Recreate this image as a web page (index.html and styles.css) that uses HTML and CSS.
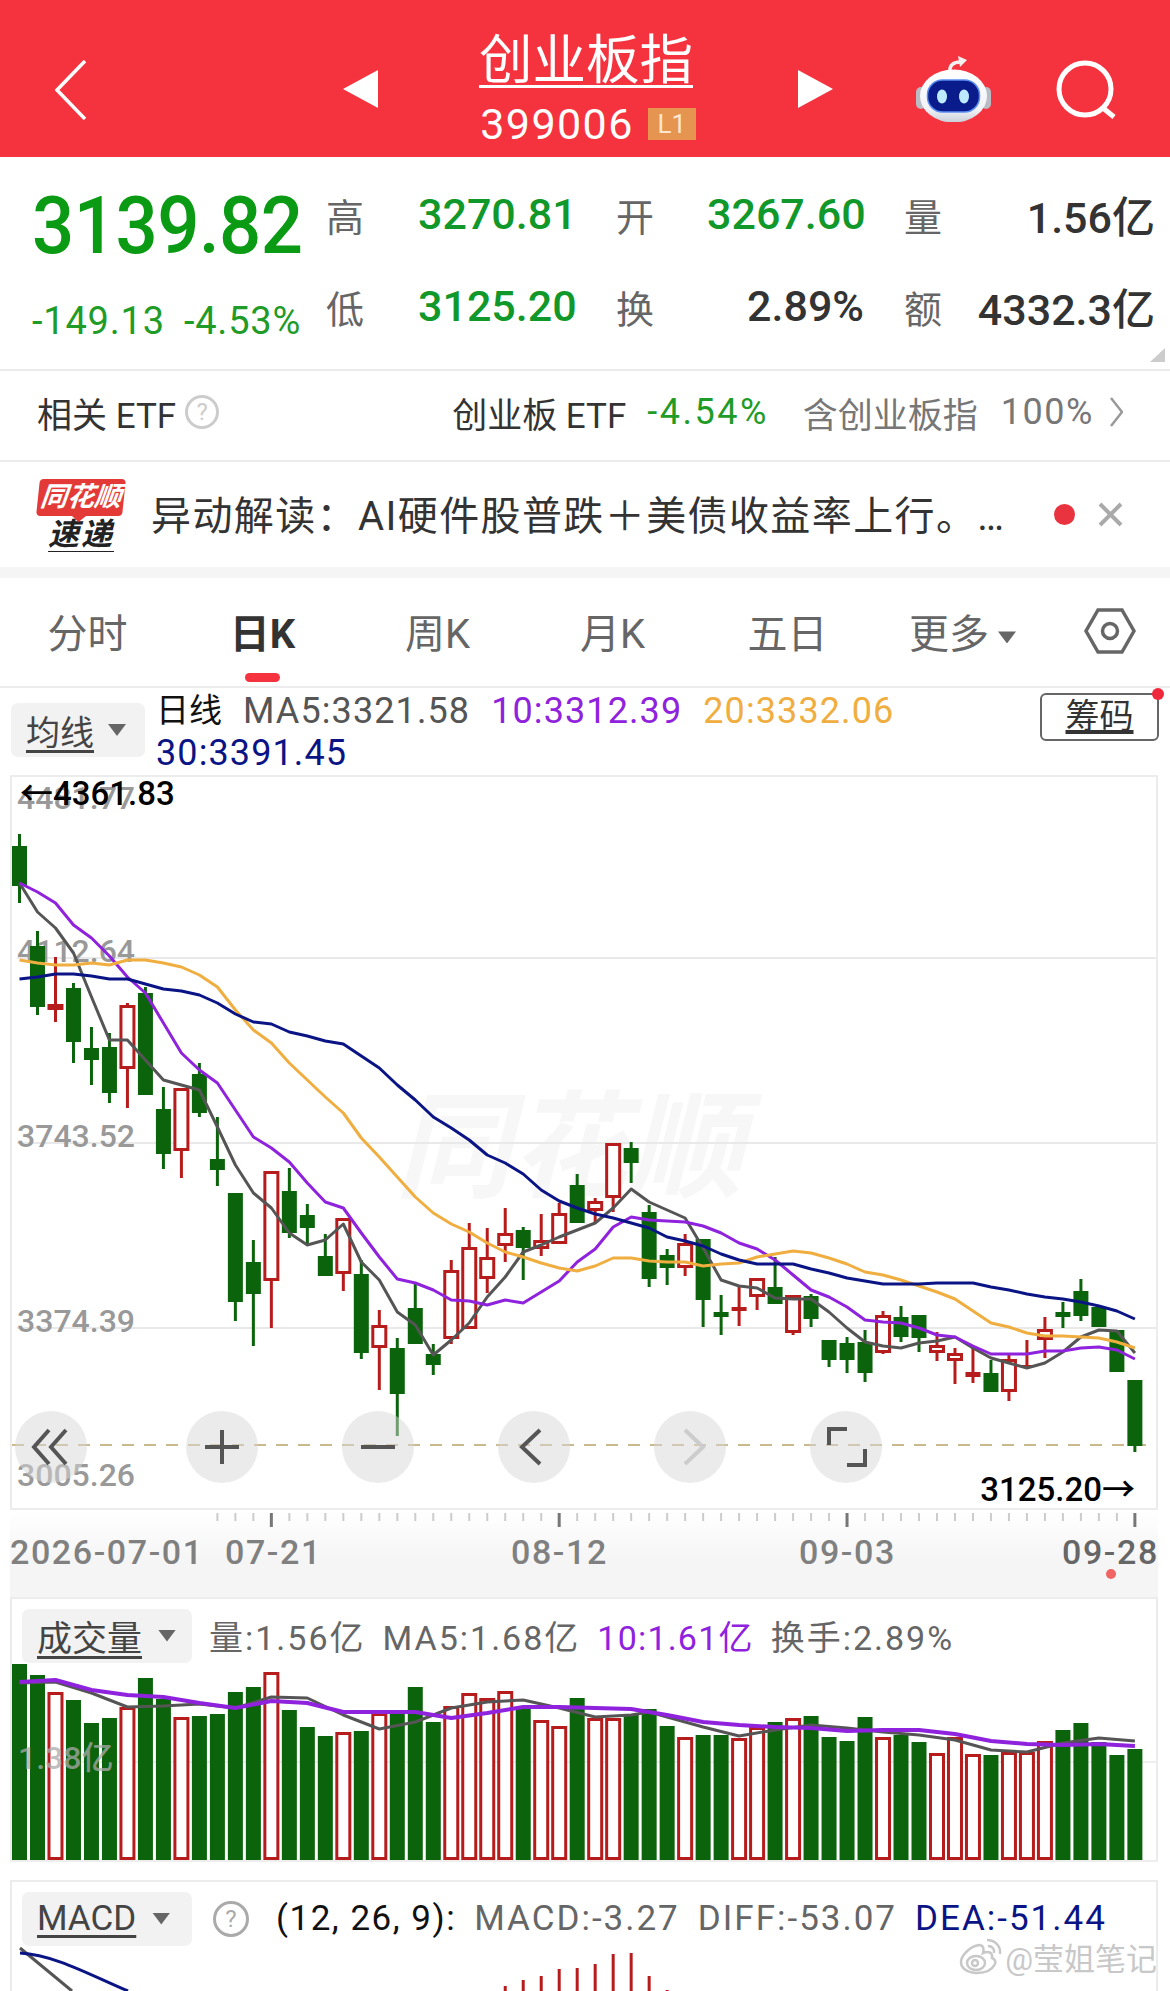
FILE: index.html
```html
<!DOCTYPE html>
<html lang="zh-CN">
<head>
  <meta charset="UTF-8">
  <meta name="viewport" content="width=device-width, initial-scale=1.0">
  <title>创业板指</title>
  <link rel="stylesheet" href="styles.css">
</head>
<body>
  <header class="top-bar">
    <svg class="back-icon" width="32" height="60" viewBox="0 0 32 60"><path d="M30 1L2 30L30 59"/></svg>
    <span class="tri tri-left"></span>
    <div class="title-box">
      <div class="title">创业板指</div>
      <div class="code-row"><span class="code">399006</span><span class="level">L1</span></div>
    </div>
    <span class="tri tri-right"></span>
    <svg class="robot-icon" width="75" height="67" viewBox="0 0 75 67">
      <defs>
        <linearGradient id="headFill" x1="0" y1="0" x2="0" y2="1">
          <stop offset="0" stop-color="#fff"/>
          <stop offset="0.75" stop-color="#f1f3f7"/>
          <stop offset="1" stop-color="#c9cfd8"/>
        </linearGradient>
      </defs>
      <path d="M34 17C33 10 38 7 44 7" fill="none" stroke="#f4f0f0" stroke-width="3.5" stroke-linecap="round"/>
      <path d="M42 1L51 5L44 12Z" fill="#f4f0f0"/>
      <rect x="0" y="32" width="10" height="22" rx="5" fill="#b9bcc4"/>
      <rect x="65" y="32" width="10" height="22" rx="5" fill="#b9bcc4"/>
      <ellipse cx="37.5" cy="41" rx="33.5" ry="26.5" fill="url(#headFill)"/>
      <rect x="11.5" y="25" width="52" height="32" rx="15" fill="#0a1c8c" stroke="#5b8cf0" stroke-width="1.5"/>
      <ellipse cx="26" cy="41.5" rx="5" ry="7" fill="#bdeaff"/>
      <ellipse cx="48" cy="41.5" rx="5" ry="7" fill="#bdeaff"/>
    </svg>
    <svg class="search-icon" width="60" height="60" viewBox="0 0 60 60"><circle cx="29" cy="29" r="26"/><path d="M47 48L58 57"/></svg>
  </header>

  <section class="quote">
    <div class="price-box">
      <div class="price">3139.82</div>
      <div class="change"><span>-149.13</span><span>-4.53%</span></div>
    </div>
    <div class="stats">
      <span class="stat-label">高</span><span class="stat-val up">3270.81</span>
      <span class="stat-label pad-mid">开</span><span class="stat-val up right">3267.60</span>
      <span class="stat-label pad-end">量</span><span class="stat-val right">1.56亿</span>
      <span class="stat-label">低</span><span class="stat-val up">3125.20</span>
      <span class="stat-label pad-mid">换</span><span class="stat-val right">2.89%</span>
      <span class="stat-label pad-end">额</span><span class="stat-val right">4332.3亿</span>
    </div>
    <span class="corner-mark"></span>
  </section>

  <section class="etf-row">
    <span>相关 ETF</span>
    <span class="help">?</span>
    <span class="etf-name">创业板 ETF</span>
    <span class="etf-pct">-4.54%</span>
    <span class="etf-hold">含创业板指</span>
    <span class="etf-share">100%</span>
    <svg class="etf-arrow" width="13" height="30" viewBox="0 0 13 30"><path d="M1 1L12 15L1 29"/></svg>
  </section>

  <section class="news-row">
    <div class="news-logo">
      <span class="logo-top">同花顺</span>
      <span class="logo-bottom">速递</span>
    </div>
    <div class="news-text">异动解读：AI硬件股普跌＋美债收益率上行。…</div>
    <span class="news-dot"></span>
    <svg class="news-close" width="25" height="25" viewBox="0 0 25 25"><path d="M2 2L23 23M23 2L2 23"/></svg>
  </section>

  <div class="band"></div>

  <nav class="tabs">
    <span class="tab">分时</span>
    <span class="tab active">日K</span>
    <span class="tab">周K</span>
    <span class="tab">月K</span>
    <span class="tab">五日</span>
    <span class="tab">更多<i class="caret caret-tab"></i></span>
    <svg class="hex-icon" width="52" height="46" viewBox="0 0 52 46"><path d="M14 2H38L50 23L38 44H14L2 23Z"/><circle cx="26" cy="23" r="7.5"/></svg>
  </nav>

  <div class="ma-row">
    <span class="pick pick-ma"><u>均线</u><i class="caret"></i></span>
    <div class="ma-legend">
      <span class="ma-name">日线</span>
      <span class="c-grey">MA5:3321.58</span>
      <span class="c-purple">10:3312.39</span>
      <span class="c-orange">20:3332.06</span>
      <span class="c-navy">30:3391.45</span>
    </div>
    <span class="chip-btn"><u>筹码</u><i class="chip-dot"></i></span>
  </div>

  <div class="kline">
    <svg class="kline-svg" width="1144" height="731" viewBox="12 777 1144 731">
      <text class="brand" x="395" y="1188">同花顺</text>
      <path class="grid" d="M17 958H1156M17 1143H1156M17 1328H1156"/>
      <path class="low-line" d="M12 1445H1156"/>
      <text class="axis-y" x="17" y="809">4481.77</text>
      <text class="axis-y" x="17" y="962">4112.64</text>
      <text class="axis-y" x="17" y="1147">3743.52</text>
      <text class="axis-y" x="17" y="1332">3374.39</text>
      <text class="axis-y" x="17" y="1486">3005.26</text>
      <g id="candles"></g>
      <text class="extreme" x="20" y="805">←4361.83</text>
      <text class="extreme" x="1135" y="1501" text-anchor="end">3125.20→</text>
    </svg>
    <div class="zoom-bar">
      <span class="zoom-btn first"><svg width="72" height="72" viewBox="0 0 72 72"><path d="M34 19L19 36L34 53M51 19L36 36L51 53"/></svg></span>
      <span class="zoom-btn"><svg width="72" height="72" viewBox="0 0 72 72"><path d="M19 36H53M36 19V53"/></svg></span>
      <span class="zoom-btn"><svg width="72" height="72" viewBox="0 0 72 72"><path d="M19 36H53"/></svg></span>
      <span class="zoom-btn"><svg width="72" height="72" viewBox="0 0 72 72"><path d="M42 19L24 36L42 53"/></svg></span>
      <span class="zoom-btn off"><svg width="72" height="72" viewBox="0 0 72 72"><path d="M31 19L49 36L31 53"/></svg></span>
      <span class="zoom-btn"><svg width="72" height="72" viewBox="0 0 72 72"><path d="M19 34V18H37M37 54H55V38"/></svg></span>
    </div>
  </div>

  <div class="date-strip">
    <svg class="date-svg" width="1148" height="87" viewBox="10 1510 1148 87">
      <g id="ticks"></g>
      <text class="date" x="10" y="1564">2026-07-01</text>
      <text class="date" x="225" y="1564">07-21</text>
      <text class="date" x="511" y="1564">08-12</text>
      <text class="date" x="799" y="1564">09-03</text>
      <text class="date date-last" x="1062" y="1564">09-28</text>
      <circle cx="1111" cy="1574" r="5" fill="#f06464"/>
    </svg>
  </div>

  <section class="panel panel-vol">
    <div class="panel-head">
      <span class="pick pick-wide"><u>成交量</u><i class="caret"></i></span>
      <div class="panel-values">
        <span>量:1.56亿</span>
        <span>MA5:1.68亿</span>
        <span class="c-purple tight">10:1.61亿</span>
        <span>换手:2.89%</span>
      </div>
    </div>
    <svg class="vol-svg" width="1144" height="198" viewBox="12 1662 1144 198">
      <path class="grid-soft" d="M17 1762H1156"/>
      <g id="volume"></g>
      <text class="axis-vol" x="18" y="1769">1.38亿</text>
    </svg>
  </section>

  <section class="panel panel-macd">
    <div class="panel-head">
      <span class="pick pick-wide"><u>MACD</u><i class="caret"></i></span>
      <span class="help help-macd">?</span>
      <div class="macd-values">
        <span class="c-black tight">(12, 26, 9):</span>
        <span>MACD:-3.27</span>
        <span>DIFF:-53.07</span>
        <span class="c-navy">DEA:-51.44</span>
      </div>
    </div>
    <svg class="macd-svg" width="1144" height="46" viewBox="12 1945 1144 46">
      <g id="macd"></g>
      <path class="macd-grey" d="M20 1948L72 1991"/>
      <path class="macd-navy" d="M20 1953C55 1955 90 1975 128 1991"/>
    </svg>
  </section>

  <div class="stamp">
    <svg width="44" height="38" viewBox="0 0 44 38">
      <path d="M18 35C8 35 2 30 2 24C2 17 12 8 20 7C25 7 25 12 24 15C29 13 34 14 33 20C36 21 37 24 36 26C33 32 26 35 18 35Z"/>
      <ellipse cx="17" cy="25" rx="9" ry="7"/>
      <circle cx="16" cy="25" r="3"/>
      <path d="M28 2C36 2 42 8 41 16M29 8C33 8 36 11 35 15"/>
    </svg>
    <span>@莹姐笔记</span>
  </div>

  <script src="chart.js"></script>
</body>
</html>
```

FILE: styles.css
```css
* {
  box-sizing: border-box;
}
html, body {
  margin: 0;
  padding: 0;
}
body {
  position: relative;
  width: 1170px;
  height: 1991px;
  overflow: hidden;
  background: #fff;
  color: #333;
  font-family: Roboto, "Noto Sans CJK SC", sans-serif;
}
i {
  font-style: normal;
}

/* top bar */
.top-bar {
  display: flex;
  align-items: flex-start;
  height: 157px;
  padding-left: 55px;
  background: #f5333f;
  color: #fff;
}
.back-icon {
  margin-top: 60px;
}
.back-icon path {
  fill: none;
  stroke: #fff;
  stroke-width: 3.5;
}
.tri {
  width: 35px;
  height: 38px;
  margin-top: 70px;
  background: #fff;
}
.tri-left {
  margin-left: 256px;
  clip-path: polygon(0 50%, 100% 0, 100% 100%);
}
.tri-right {
  clip-path: polygon(0 0, 100% 50%, 0 100%);
}
.title-box {
  width: 420px;
  padding-top: 26px;
  text-align: center;
}
.title {
  font-size: 53.5px;
  line-height: 70px;
  margin-right: 4px;
  text-decoration: underline;
  text-decoration-thickness: 3px;
  text-underline-offset: 6px;
}
.code-row {
  display: flex;
  justify-content: center;
  align-items: center;
  margin-top: 8px;
  height: 40px;
}
.code {
  font-size: 43px;
  letter-spacing: 1.4px;
}
.level {
  margin-left: 14px;
  width: 48px;
  height: 32px;
  background: #e5954f;
  color: #fbe6cf;
  font-size: 26px;
  line-height: 32px;
}
.robot-icon {
  margin: 55px 0 0 83px;
}
.search-icon {
  margin: 60px 0 0 65px;
}
.search-icon circle,
.search-icon path {
  fill: none;
  stroke: #fff;
  stroke-width: 5;
}

/* quote block */
.quote {
  position: relative;
  display: flex;
  height: 212px;
  padding: 11px 0 0 32px;
}
.price-box {
  width: 294px;
}
.price {
  color: #0b9a13;
  font-size: 80px;
  font-weight: 500;
  line-height: 116px;
  letter-spacing: -0.6px;
  transform: scaleX(0.93);
  transform-origin: left center;
}
.change {
  display: flex;
  gap: 19px;
  color: #1f9c27;
  font-size: 38px;
  line-height: 74px;
  letter-spacing: 0.8px;
  white-space: nowrap;
}
.stats {
  display: grid;
  grid-template-columns: 92px 154px 135px 157px 80px 1fr;
  grid-auto-rows: 92px;
  width: 829px;
  align-items: center;
}
.stat-label {
  color: #666;
  font-size: 38px;
}
.pad-mid {
  padding-left: 44px;
}
.pad-end {
  padding-left: 40px;
}
.stat-val {
  color: #333;
  font-size: 43px;
  font-weight: 500;
  white-space: nowrap;
}
.stat-val.up {
  color: #10982a;
}
.stat-val.right {
  text-align: right;
}
.corner-mark {
  position: absolute;
  right: 5px;
  bottom: 7px;
  width: 15px;
  height: 14px;
  background: #ccc;
  clip-path: polygon(100% 0, 100% 100%, 0 100%);
}

/* etf row */
.etf-row {
  display: flex;
  align-items: center;
  height: 91px;
  padding: 0 0 7px 37px;
  border-top: 2px solid #ececec;
  font-size: 35px;
  color: #333;
}
.help {
  width: 34px;
  height: 34px;
  margin-left: 9px;
  border: 3px solid #ccc;
  border-radius: 50%;
  color: #ccc;
  font-size: 24px;
  line-height: 28px;
  text-align: center;
}
.etf-name {
  margin-left: 233px;
}
.etf-pct {
  margin-left: 21px;
  color: #1f9c27;
  font-size: 36px;
  letter-spacing: 2.5px;
}
.etf-hold {
  margin-left: 34px;
  color: #777;
}
.etf-share {
  margin-left: 23px;
  color: #777;
  font-size: 36px;
  letter-spacing: 1.5px;
}
.etf-arrow {
  margin-left: 16px;
}
.etf-arrow path {
  fill: none;
  stroke: #999;
  stroke-width: 2.5;
}

/* news row */
.news-row {
  display: flex;
  align-items: center;
  height: 107px;
  padding-left: 37px;
  border-top: 2px solid #ececec;
}
.news-logo {
  display: flex;
  flex-direction: column;
  align-items: center;
  width: 88px;
  height: 72px;
}
.logo-top {
  position: relative;
  width: 86px;
  height: 37px;
  background: #e33a38;
  border-radius: 4px;
  transform: skewX(-6deg);
  color: #fff;
  font-size: 27px;
  font-weight: 700;
  font-style: italic;
  line-height: 37px;
  text-align: center;
  white-space: nowrap;
}
.logo-top::after {
  content: "";
  position: absolute;
  left: 36px;
  bottom: -6px;
  width: 14px;
  height: 6px;
  background: #e33a38;
  clip-path: polygon(0 0, 100% 0, 50% 100%);
}
.logo-bottom {
  margin-top: 3px;
  color: #222;
  font-size: 31px;
  font-weight: 700;
  font-style: italic;
  line-height: 32px;
  letter-spacing: 2px;
  border-bottom: 1px solid #222;
}
.news-text {
  width: 903px;
  margin: -4px 0 0 26px;
  color: #333;
  font-size: 40px;
  white-space: nowrap;
  letter-spacing: 1.4px;
}
.news-dot {
  width: 21px;
  height: 21px;
  border-radius: 50%;
  background: #e9333f;
}
.news-close {
  margin-left: 23px;
}
.news-close path {
  fill: none;
  stroke: #aaa;
  stroke-width: 4;
}
.band {
  height: 11px;
  background: #f5f5f5;
}

/* period tabs */
.tabs {
  position: relative;
  display: flex;
  align-items: center;
  height: 110px;
  padding-bottom: 2px;
  border-bottom: 2px solid #ececec;
}
.tab {
  width: 175px;
  color: #666;
  font-size: 40px;
  text-align: center;
  white-space: nowrap;
}
.tab.active {
  position: relative;
  color: #333;
  font-weight: 700;
}
.tab.active::after {
  content: "";
  position: absolute;
  left: 70px;
  bottom: -22px;
  width: 35px;
  height: 9px;
  border-radius: 5px;
  background: #f5333f;
}
.hex-icon {
  margin-left: 34px;
}
.hex-icon path,
.hex-icon circle {
  fill: none;
  stroke: #666;
  stroke-width: 3.5;
}
.caret {
  display: inline-block;
  width: 18px;
  height: 12px;
  margin-left: 14px;
  background: #666;
  clip-path: polygon(0 0, 100% 0, 50% 100%);
  vertical-align: middle;
}
.caret-tab {
  margin-left: 9px;
}

/* moving average row */
.ma-row {
  position: relative;
  display: flex;
  align-items: flex-start;
  height: 87px;
  padding-left: 11px;
}
.pick {
  display: flex;
  align-items: center;
  height: 54px;
  border-radius: 7px;
  background: #f2f2f2;
  color: #444;
  font-size: 34px;
}
.pick u {
  text-underline-offset: 5px;
}
.pick-ma {
  width: 134px;
  margin-top: 15px;
  padding-left: 15px;
}
.ma-legend {
  display: flex;
  flex-wrap: wrap;
  width: 860px;
  margin-left: 11px;
  padding-top: 2px;
  column-gap: 21px;
  color: #555;
  font-size: 36px;
  line-height: 42px;
  letter-spacing: 1.1px;
}
.ma-name {
  color: #111;
  font-size: 33px;
  letter-spacing: 0;
}
.c-grey { color: #555; }
.c-purple { color: #8f22dd; }
.c-orange { color: #efae3f; }
.c-navy { color: #0a1484; }
.c-black { color: #111; }
.chip-btn {
  position: absolute;
  left: 1040px;
  top: 5px;
  width: 119px;
  height: 48px;
  border: 2px solid #666;
  border-radius: 6px;
  color: #333;
  font-size: 34px;
  line-height: 42px;
  text-align: center;
}
.chip-btn u {
  text-decoration-thickness: 4px;
  text-underline-offset: 2px;
}
.chip-dot {
  position: absolute;
  right: -7px;
  top: -7px;
  width: 12px;
  height: 12px;
  border-radius: 50%;
  background: #f0283c;
}

/* kline chart */
.kline {
  position: relative;
  width: 1148px;
  height: 735px;
  margin-left: 10px;
  border: 2px solid #ececec;
}
.kline-svg {
  display: block;
  overflow: visible;
}
.brand {
  fill: #f7f7f7;
  font-size: 116px;
  font-weight: 700;
  font-style: italic;
}
.grid {
  fill: none;
  stroke: #e9e9e9;
  stroke-width: 2;
}
.grid-soft {
  fill: none;
  stroke: #eee;
  stroke-width: 2;
}
.low-line {
  fill: none;
  stroke: #c9b98d;
  stroke-width: 2;
  stroke-dasharray: 12 10;
}
.axis-y {
  fill: #999;
  font-size: 32px;
  font-weight: 500;
}
.extreme {
  fill: #000;
  font-size: 33px;
  font-weight: 500;
}
.zoom-bar {
  position: absolute;
  left: 3px;
  top: 634px;
  display: flex;
  gap: 84px;
}
.zoom-btn {
  width: 72px;
  height: 72px;
  border-radius: 50%;
  background: rgba(215, 215, 215, 0.5);
}
.zoom-btn.first {
  margin-right: 15px;
}
.zoom-btn svg {
  display: block;
}
.zoom-btn path {
  fill: none;
  stroke: #555;
  stroke-width: 4;
}
.zoom-btn.off path {
  stroke: #ccc;
}

/* date strip */
.date-strip {
  width: 1148px;
  height: 87px;
  margin-left: 10px;
  background: linear-gradient(#fff, #f5f5f5 60%);
}
.date-svg {
  display: block;
  overflow: visible;
}
.date {
  fill: #808080;
  font-size: 34px;
  font-weight: 500;
  letter-spacing: 1.6px;
}
.date-last {
  fill: #666;
}

/* lower panels */
.panel {
  width: 1148px;
  margin-left: 10px;
  border-top: 2px solid #ececec;
  border-left: 2px solid #ececec;
  border-right: 2px solid #ececec;
}
.panel-vol {
  height: 265px;
  border-bottom: 2px solid #eee;
}
.panel-macd {
  margin-top: 18px;
  height: 120px;
}
.panel-head {
  display: flex;
  align-items: center;
  height: 53px;
  margin-top: 10px;
  padding-left: 10px;
}
.pick-wide {
  width: 170px;
  padding-left: 15px;
  font-size: 35px;
}
.pick-wide .caret {
  margin-left: 16px;
}
.panel-values {
  display: flex;
  gap: 17px;
  margin-left: 17px;
  color: #666;
  font-size: 34px;
  letter-spacing: 2px;
  white-space: nowrap;
}
.panel-values .tight {
  letter-spacing: 1.2px;
}
.vol-svg,
.macd-svg {
  display: block;
  overflow: visible;
}
.axis-vol {
  fill: rgba(170, 170, 170, 0.75);
  font-size: 32px;
  font-weight: 500;
}
.help-macd {
  width: 36px;
  height: 36px;
  margin-left: 21px;
  border-color: #aaa;
  color: #aaa;
  line-height: 30px;
}
.macd-values {
  display: flex;
  gap: 18px;
  margin-left: 27px;
  color: #666;
  font-size: 35px;
  letter-spacing: 2px;
  white-space: nowrap;
}
.macd-values .tight {
  letter-spacing: 1.5px;
}
.macd-grey,
.macd-navy {
  fill: none;
  stroke-width: 3;
}
.macd-grey {
  stroke: #555;
}
.macd-navy {
  stroke: #0a1484;
}

/* watermark */
.stamp {
  position: absolute;
  right: 13px;
  bottom: 12px;
  display: flex;
  align-items: center;
  gap: 2px;
  color: #c8c8c8;
  font-size: 31px;
  text-shadow: 0 0 2px #fff, 0 0 2px #fff;
  white-space: nowrap;
}
.stamp path,
.stamp ellipse,
.stamp circle {
  fill: #fff;
  stroke: #c8c8c8;
  stroke-width: 2.5;
}
.stamp path:last-child {
  fill: none;
}
```

FILE: chart.js
```js
var SVG_NS = 'http://www.w3.org/2000/svg';
var STEP = 17.99;
var FIRST_X = 19.5;

function barX(i) {
  return FIRST_X + STEP * i;
}

function addShape(parent, tag, attrs) {
  var el = document.createElementNS(SVG_NS, tag);
  for (var key in attrs) {
    el.setAttribute(key, attrs[key]);
  }
  parent.appendChild(el);
  return el;
}

// g = falling, r = rising, s = rising with a thin solid body: [type, wick top, body top, body bottom, wick bottom]
var candles = [
  ['g', 834, 846, 886, 903], ['g', 931, 946, 1007, 1015], ['r', 957, 1004, 1010, 1022], ['g', 983, 988, 1042, 1063],
  ['g', 1027, 1048, 1060, 1085], ['g', 1033, 1047, 1093, 1103], ['r', 1003, 1005, 1069, 1108], ['g', 987, 993, 1095, 1095],
  ['g', 1087, 1109, 1154, 1169], ['r', 1088, 1088, 1151, 1178], ['g', 1063, 1074, 1113, 1117], ['g', 1117, 1159, 1170, 1186],
  ['g', 1193, 1193, 1302, 1321], ['g', 1240, 1262, 1294, 1346], ['r', 1171, 1171, 1281, 1328], ['g', 1168, 1191, 1233, 1238],
  ['g', 1204, 1215, 1228, 1244], ['g', 1234, 1256, 1276, 1276], ['r', 1218, 1218, 1274, 1291], ['g', 1260, 1274, 1353, 1359],
  ['r', 1310, 1325, 1348, 1390], ['g', 1338, 1348, 1394, 1436], ['g', 1284, 1308, 1344, 1344], ['g', 1344, 1354, 1365, 1375],
  ['r', 1260, 1270, 1339, 1344], ['r', 1223, 1247, 1329, 1329], ['r', 1228, 1257, 1279, 1293], ['r', 1208, 1233, 1246, 1262],
  ['g', 1227, 1230, 1248, 1280], ['r', 1214, 1240, 1249, 1256], ['r', 1203, 1213, 1244, 1244], ['g', 1174, 1185, 1223, 1223],
  ['r', 1198, 1201, 1211, 1223], ['r', 1143, 1143, 1198, 1212], ['g', 1142, 1148, 1163, 1183], ['g', 1205, 1212, 1279, 1287],
  ['g', 1249, 1255, 1268, 1285], ['r', 1234, 1243, 1268, 1276], ['g', 1239, 1239, 1300, 1327], ['g', 1295, 1312, 1317, 1335],
  ['s', 1287, 1307, 1311, 1326], ['r', 1278, 1278, 1297, 1310], ['g', 1257, 1287, 1304, 1304], ['r', 1295, 1295, 1333, 1335],
  ['g', 1294, 1296, 1319, 1327], ['g', 1340, 1340, 1360, 1367], ['g', 1337, 1343, 1360, 1373], ['g', 1330, 1342, 1373, 1382],
  ['r', 1311, 1315, 1353, 1354], ['g', 1306, 1317, 1337, 1342], ['g', 1315, 1315, 1338, 1352], ['r', 1332, 1345, 1353, 1361],
  ['r', 1348, 1353, 1361, 1384], ['s', 1348, 1372, 1377, 1383], ['g', 1360, 1373, 1392, 1392], ['r', 1353, 1359, 1392, 1401],
  ['s', 1340, 1365, 1367, 1368], ['r', 1317, 1329, 1340, 1358], ['g', 1302, 1312, 1317, 1328], ['g', 1279, 1291, 1316, 1321],
  ['g', 1305, 1307, 1327, 1327], ['g', 1330, 1330, 1372, 1372], ['g', 1380, 1380, 1446, 1452]
];

// moving averages, one y for each candle
var ma5 = [883, 912, 928, 953, 997, 1040, 1040, 1060, 1080, 1085, 1090, 1127, 1165, 1193, 1208, 1233, 1245, 1240, 1224, 1262, 1280, 1312, 1325, 1355, 1340, 1323, 1297, 1277, 1252, 1245, 1237, 1230, 1223, 1208, 1189, 1202, 1210, 1218, 1248, 1280, 1286, 1288, 1298, 1299, 1299, 1312, 1328, 1342, 1346, 1348, 1343, 1341, 1337, 1348, 1358, 1363, 1368, 1363, 1352, 1337, 1330, 1331, 1353];
var ma10 = [883, 892, 903, 925, 938, 956, 977, 993, 1023, 1053, 1070, 1083, 1110, 1137, 1148, 1162, 1183, 1202, 1208, 1233, 1257, 1279, 1283, 1290, 1300, 1301, 1305, 1300, 1303, 1292, 1281, 1262, 1249, 1227, 1217, 1220, 1221, 1222, 1226, 1233, 1243, 1249, 1260, 1275, 1290, 1297, 1307, 1320, 1322, 1323, 1328, 1335, 1337, 1346, 1354, 1354, 1354, 1351, 1351, 1348, 1347, 1350, 1359];
var ma20 = [960, 963, 965, 965, 963, 965, 960, 960, 963, 967, 975, 987, 1010, 1030, 1043, 1063, 1080, 1097, 1113, 1138, 1157, 1177, 1197, 1213, 1224, 1232, 1243, 1252, 1257, 1263, 1268, 1271, 1266, 1258, 1258, 1261, 1262, 1262, 1266, 1264, 1263, 1257, 1254, 1251, 1253, 1258, 1264, 1272, 1275, 1280, 1286, 1292, 1299, 1311, 1323, 1327, 1333, 1336, 1336, 1337, 1338, 1342, 1348];
var ma30 = [979, 977, 974, 974, 976, 979, 979, 984, 989, 991, 995, 1003, 1014, 1022, 1024, 1032, 1036, 1041, 1044, 1056, 1068, 1085, 1100, 1117, 1128, 1140, 1155, 1163, 1174, 1190, 1201, 1208, 1214, 1218, 1223, 1228, 1237, 1241, 1246, 1254, 1260, 1264, 1264, 1264, 1269, 1273, 1278, 1281, 1284, 1284, 1284, 1283, 1283, 1283, 1287, 1290, 1294, 1297, 1299, 1302, 1306, 1311, 1319];

// volume bars: type letter plus top as page y
var volumes = ['g1664', 'g1675', 'r1692', 'g1700', 'g1723', 'g1718', 'r1707', 'g1678', 'g1699', 'r1717', 'g1716', 'g1714', 'g1692', 'g1687', 'r1672', 'g1710', 'g1727', 'g1736', 'r1732', 'g1731', 'r1713', 'g1711', 'g1687', 'g1722', 'r1706', 'r1693', 'r1698', 'r1691', 'g1707', 'r1720', 'r1726', 'g1698', 'r1718', 'r1718', 'g1715', 'g1709', 'g1726', 'r1737', 'g1735', 'g1735', 'r1738', 'r1727', 'g1722', 'r1718', 'g1716', 'g1737', 'g1741', 'g1717', 'r1737', 'g1735', 'g1742', 'r1753', 'r1737', 'r1754', 'g1755', 'r1752', 'r1752', 'r1741', 'g1730', 'g1723', 'g1742', 'g1755', 'g1749'];

// volume averages: [candle index, page y], sampled about every other bar
var volMa5 = [[0, 1683], [2, 1682], [4, 1693], [6, 1707], [8, 1706], [10, 1704], [12, 1708], [14, 1697], [16, 1698], [18, 1715], [20, 1729], [22, 1722], [24, 1708], [26, 1702], [28, 1700], [30, 1708], [32, 1717], [34, 1715], [35, 1712], [38, 1727], [40, 1736], [42, 1730], [44, 1725], [46, 1728], [48, 1732], [50, 1735], [52, 1740], [54, 1750], [56, 1752], [58, 1743], [60, 1738], [62, 1741]];
var volMa10 = [[0, 1682], [2, 1680], [4, 1690], [6, 1695], [8, 1697], [10, 1703], [12, 1708], [14, 1701], [16, 1703], [18, 1712], [20, 1712], [22, 1712], [24, 1718], [26, 1713], [28, 1707], [30, 1707], [32, 1708], [34, 1709], [36, 1715], [38, 1722], [40, 1725], [42, 1727], [44, 1728], [46, 1731], [48, 1730], [50, 1730], [52, 1734], [54, 1741], [56, 1744], [58, 1745], [60, 1744], [62, 1746]];

// macd bars: [candle index, top as page y], all run off the bottom of the page
var macdBars = [[27, 1986], [28, 1980], [29, 1976], [30, 1969], [31, 1968], [32, 1964], [33, 1954], [34, 1953], [35, 1976], [36, 1990]];

var GREEN = '#0b640b';
var RED = '#b71c1c';

var candleGroup = document.getElementById('candles');
candles.forEach(function (c, i) {
  var x = barX(i);
  var color = c[0] === 'g' ? GREEN : RED;
  addShape(candleGroup, 'path', {
    d: 'M' + x + ' ' + c[1] + 'V' + c[4],
    stroke: color,
    'stroke-width': 3
  });
  if (c[0] === 'r') {
    addShape(candleGroup, 'rect', {
      x: x - 6.5, y: c[2] + 1.5, width: 13, height: c[3] - c[2] - 3,
      fill: '#fff', stroke: color, 'stroke-width': 3
    });
  } else {
    addShape(candleGroup, 'rect', {
      x: x - 7.5, y: c[2], width: 15, height: c[3] - c[2], fill: color
    });
  }
});

function drawLine(parent, points, color, width) {
  addShape(parent, 'polyline', {
    points: points.join(' '),
    fill: 'none',
    stroke: color,
    'stroke-width': width,
    'stroke-linejoin': 'round'
  });
}

function maPoints(values) {
  return values.map(function (y, i) {
    return barX(i).toFixed(1) + ',' + y;
  });
}

drawLine(candleGroup, maPoints(ma5), '#555', 3);
drawLine(candleGroup, maPoints(ma10), '#8f22dd', 3);
drawLine(candleGroup, maPoints(ma20), '#efae3f', 3);
drawLine(candleGroup, maPoints(ma30), '#0a1484', 3);

var ticks = document.getElementById('ticks');
for (var t = 11; t < 63; t++) {
  var major = [14, 30, 46, 62].indexOf(t) !== -1;
  addShape(ticks, 'path', {
    d: 'M' + barX(t) + ' 1513V' + (major ? 1527 : 1521),
    stroke: major ? '#777' : '#ccc',
    'stroke-width': major ? 3 : 2
  });
}

var volumeGroup = document.getElementById('volume');
volumes.forEach(function (v, i) {
  var top = parseInt(v.slice(1), 10);
  var x = barX(i);
  if (v[0] === 'g') {
    addShape(volumeGroup, 'rect', { x: x - 7.5, y: top, width: 15, height: 1860 - top, fill: GREEN });
  } else {
    addShape(volumeGroup, 'rect', {
      x: x - 6.5, y: top + 1.5, width: 13, height: 1857 - top,
      fill: '#fff', stroke: RED, 'stroke-width': 3
    });
  }
});

function pairPoints(pairs) {
  return pairs.map(function (p) {
    return barX(p[0]).toFixed(1) + ',' + p[1];
  });
}

drawLine(volumeGroup, pairPoints(volMa5), '#555', 3);
drawLine(volumeGroup, pairPoints(volMa10), '#8f22dd', 4);

var macdGroup = document.getElementById('macd');
macdBars.forEach(function (m) {
  addShape(macdGroup, 'path', {
    d: 'M' + barX(m[0]) + ' ' + m[1] + 'V1991',
    stroke: RED,
    'stroke-width': 3
  });
});
```
